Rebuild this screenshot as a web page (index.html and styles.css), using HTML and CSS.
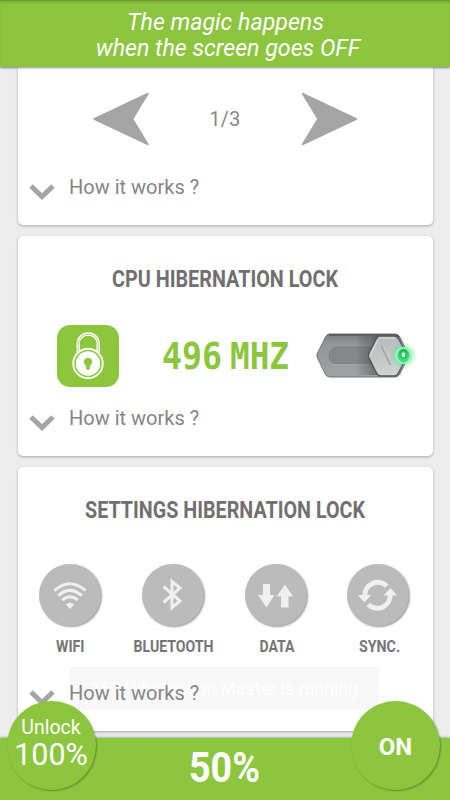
FILE: index.html
```html
<!DOCTYPE html>
<html lang="en">
<head>
<meta charset="utf-8">
<title>Hibernation Master</title>
<link rel="stylesheet" href="styles.css">
</head>
<body>
<div class="app">
  <header class="banner"><p class="l1">The magic happens</p><p class="l2">when the screen goes OFF</p></header>
  <main class="cards">
    <section class="card pager-card">
      <div class="pager">
        <svg width="57" height="54" viewBox="0 0 57 54"><path d="M1 27L55 1.5L39.500 27L55 52.500Z" class="arrow"/></svg>
        <span class="page">1/3</span>
        <svg width="57" height="54" viewBox="0 0 57 54"><path d="M55.500 27L1.500 1.500L17 27L1.500 52.500Z" class="arrow"/></svg>
      </div>
      <div class="how"><svg width="26" height="18" viewBox="0 0 26 18"><path d="M2 3L13 13.500L24 3" class="chev"/></svg><span>How it works ?</span></div>
    </section>
    <section class="card cpu-card">
      <h2><svg width="228" height="30"><text x="1" y="23" textLength="226" lengthAdjust="spacingAndGlyphs">CPU HIBERNATION LOCK</text></svg></h2>
      <div class="cpu">
        <svg class="lock" width="62" height="62" viewBox="0 0 62 62">
          <rect width="62" height="62" rx="13" fill="#8cc63f"/>
          <path d="M21.200 28V18.500A10 9.500 0 0 1 41.200 18.500V28" fill="none" stroke="#fff" stroke-width="3.400"/>
          <path d="M21.200 28V18.500A10 9.500 0 0 1 41.200 18.500V28" fill="none" stroke="#8cc63f" stroke-width=".7"/>
          <circle cx="31" cy="38.500" r="15.700" fill="#fff"/>
          <circle cx="31" cy="38.500" r="13" fill="none" stroke="#8cc63f" stroke-width="1.600"/>
          <circle cx="31" cy="37" r="4.200" fill="#8cc63f"/>
          <path d="M29 38h4v5a2 2 0 0 1-4 0z" fill="#8cc63f"/>
        </svg>
        <svg class="mhz" width="128" height="42"><text x="-1" y="31.500" textLength="60" lengthAdjust="spacingAndGlyphs">496</text><text x="67" y="31.500" textLength="59" lengthAdjust="spacingAndGlyphs">MHZ</text></svg>
        <svg class="switch" width="110" height="60" viewBox="0 0 110 60">
          <defs>
            <linearGradient id="base" x1="0" y1="0" x2="0" y2="1"><stop offset="0" stop-color="#7d8082"/><stop offset=".25" stop-color="#949799"/><stop offset="1" stop-color="#a0a2a3"/></linearGradient>
            <linearGradient id="knob" x1="0" y1="0" x2="0" y2="1"><stop offset="0" stop-color="#b8babb"/><stop offset="1" stop-color="#d2d3d3"/></linearGradient>
            <radialGradient id="glow"><stop offset=".3" stop-color="#2de676" stop-opacity=".6"/><stop offset="1" stop-color="#56ef91" stop-opacity="0"/></radialGradient>
            <radialGradient id="led" cx=".5" cy=".35"><stop offset="0" stop-color="#8effac"/><stop offset=".45" stop-color="#16b84e"/><stop offset="1" stop-color="#37e676"/></radialGradient>
            <linearGradient id="shade"><stop offset="0" stop-color="#333" stop-opacity="0"/><stop offset="1" stop-color="#333" stop-opacity=".5"/></linearGradient>
          </defs>
          <path d="M14 9H80Q83 9 84.500 11.500L93 28Q94 30.500 93 33L84.500 49.500Q83 52 80 52H15Q12 52 10.500 49.500L2.500 33Q1 30.500 2.500 28L10.500 12Q12 9 14 9Z" fill="url(#base)" stroke="#717477"/>
          <path d="M14 10H80Q83 10 84 12" fill="none" stroke="#55585a" stroke-width="1.500"/>
          <rect x="14" y="22" width="50" height="17.500" rx="8.700" fill="#85888a" stroke="#787b7d" stroke-width=".7"/>
          <path d="M18 39.700H55" stroke="#adafb0"/>
          <path d="M40 11H64L54 30L63 50H40Z" fill="url(#shade)"/>
          <path d="M64 11H79Q82 11 83.500 13.500L91 28Q92 30.500 91 33L83.500 48Q82 51 79 51H66Q63 51 61.500 48L54 33Q52.500 30.500 54 28L61.500 13.500Q63 11 64 11Z" fill="url(#knob)" stroke="#55585a" stroke-width="1.500"/>
          <path d="M64 13H80M55.500 30L63 14" fill="none" stroke="#e2e2e2"/>
          <path d="M67 22L75.500 39" stroke="#a5a7a8" stroke-width="2.500" stroke-linecap="round"/>
          <path d="M68.500 22L76.500 39" stroke="#dadada" stroke-width=".8"/>
          <circle cx="88.500" cy="30.500" r="8.500" fill="#e3f1e7"/>
          <circle cx="88.500" cy="30.500" r="14" fill="url(#glow)"/>
          <ellipse cx="88.500" cy="30.500" rx="5.800" ry="6.800" fill="url(#led)"/>
          <ellipse cx="88.500" cy="30" rx="2" ry="2.300" fill="#dcffe6"/>
        </svg>
      </div>
      <div class="how"><svg width="26" height="18" viewBox="0 0 26 18"><path d="M2 3L13 13.500L24 3" class="chev"/></svg><span>How it works ?</span></div>
    </section>
    <section class="card settings-card">
      <h2><svg width="282" height="30"><text x="1" y="23" textLength="280" lengthAdjust="spacingAndGlyphs">SETTINGS HIBERNATION LOCK</text></svg></h2>
      <div class="settings">
        <div class="item"><svg class="disc" width="62" height="62" viewBox="0 0 62 62">
          <g fill="none" stroke="#f0f0f0" stroke-width="3"><path d="M15.300 26.700Q31 12.700 46.700 26.700"/><path d="M19.300 31.600Q31 21.200 42.700 31.600"/><path d="M23.300 36.100Q31 29.400 38.700 36.100"/></g><path d="M26.800 40.500Q31 37 35.200 40.500L31 45Z" fill="#f0f0f0"/></svg>
          <svg width="62" height="22"><text x="17" y="17" textLength="28.500" lengthAdjust="spacingAndGlyphs">WIFI</text></svg></div>
        <div class="item"><svg class="disc" width="62" height="62" viewBox="0 0 62 62">
          <path d="M21.500 22.500L38 37L30 43.500V17.500L38 24L21.500 38.500" fill="none" stroke="#f0f0f0" stroke-width="3"/></svg>
          <svg width="86" height="22"><text x="3.500" y="17" textLength="80" lengthAdjust="spacingAndGlyphs">BLUETOOTH</text></svg></div>
        <div class="item"><svg class="disc" width="62" height="62" viewBox="0 0 62 62">
          <path d="M18 20H25V31H29.500L21.500 43.500L13 31H18ZM36 43.500V32.500H31.500L40 20.500L48 32.500H43.500V43.500Z" fill="#f0f0f0"/></svg>
          <svg width="62" height="22"><text x="14.500" y="17" textLength="35" lengthAdjust="spacingAndGlyphs">DATA</text></svg></div>
        <div class="item"><svg class="disc" width="62" height="62" viewBox="0 0 62 62">
          <g fill="none" stroke="#f0f0f0" stroke-width="5"><path d="M17.800 32A13 13 0 0 1 39.800 22"/><path d="M43.200 30A13 13 0 0 1 21.200 40.500"/></g><path d="M11 31H24L17.500 38.500ZM36.500 31.500L43.500 24L50 31.500Z" fill="#f0f0f0"/></svg>
          <svg width="62" height="22"><text x="12" y="17" textLength="41" lengthAdjust="spacingAndGlyphs">SYNC.</text></svg></div>
      </div>
      <div class="toast">360 Hibernation Master is running</div>
      <div class="how"><svg width="26" height="18" viewBox="0 0 26 18"><path d="M2 3L13 13.500L24 3" class="chev"/></svg><span>How it works ?</span></div>
    </section>
  </main>
  <footer class="bar"><svg width="76" height="56"><text x="2" y="44" textLength="71" lengthAdjust="spacingAndGlyphs">50%</text></svg></footer>
  <div class="fab unlock"><span>Unlock</span><b>100%</b></div>
  <div class="fab on">ON</div>
</div>
</body>
</html>
```
FILE: styles.css
```css
* { box-sizing: border-box; }
body { margin: 0; font-family: Roboto, sans-serif; background: #ededed; }
svg { display: block; flex: none; overflow: visible; }
p, h2 { margin: 0; }
.app { position: relative; width: 450px; height: 800px; overflow: hidden; display: flex; flex-direction: column; }
.banner { position: relative; z-index: 1; flex: none; height: 67px; padding-top: 8px; background: #8cc63f; border-top: 1px solid #6f9c35; box-shadow: 0 1px 2px rgba(0,0,0,.45), inset 0 2px 2px rgba(0,0,0,.1); color: #fff; text-align: center; font-size: 23.2px; font-style: italic; line-height: 26px; }
.l1 { padding-left: 1px; }
.l2 { padding-left: 6px; }
.cards { height: 671px; flex: none; padding: 0 17.5px; display: flex; flex-direction: column; gap: 11px; }
.card { position: relative; flex: none; width: 415px; background: #fff; border-radius: 5px; box-shadow: 0 1px 3px rgba(0,0,0,.3); }
.pager-card { height: 158px; border-radius: 0 0 5px 5px; padding-top: 25px; }
.pager { display: flex; justify-content: space-between; align-items: center; padding: 0 75px; height: 54px; }
.arrow { fill: #a5a5a5; stroke: #a5a5a5; stroke-width: 1.5; stroke-linejoin: round; }
.page { color: #858585; font-size: 19.5px; letter-spacing: .3px; }
.how { position: relative; display: flex; align-items: flex-start; height: 26px; padding-left: 11.5px; font-size: 20px; line-height: 26px; color: #858585; }
.how svg { margin-top: 9px; }
.how span { margin-left: 14px; }
.chev { fill: none; stroke: #a5a5a5; stroke-width: 5; }
.pager-card .how { margin-top: 28px; }
.cpu-card { height: 220px; padding-top: 28px; }
h2 { display: flex; justify-content: center; height: 30px; }
h2 text { font-size: 23px; font-weight: 700; fill: #707070; }
.cpu { display: flex; height: 62px; margin-top: 30.500px; padding-left: 39.5px; }
.mhz { margin: 12px 0 0 44px; }
.mhz text { font-family: "DejaVu Sans Mono", monospace; font-size: 37.500px; font-weight: 700; fill: #8cc63f; }
.switch { margin: 0 0 0 24px; }
.cpu-card .how { margin-top: 18.500px; }
.settings-card { height: 264px; padding-top: 28px; }
.settings { display: flex; justify-content: space-between; margin-top: 39px; padding: 0 23px 0 21.500px; }
.item { width: 62px; display: flex; flex-direction: column; align-items: center; }
.item text { font-size: 16px; font-weight: 700; fill: #757575; }
.item > svg + svg { margin-top: 9px; }
.disc { border-radius: 50%; background: #bbb; box-shadow: 1px 1px 2px rgba(0,0,0,.4); }
.toast { position: absolute; left: 52.500px; top: 200px; width: 309px; height: 43px; padding-left: 20px; background: #f8f8f8; color: #fff; font-size: 17.5px; line-height: 44px; letter-spacing: .12px; white-space: nowrap; }
.settings-card .how { margin-top: 23px; }
.bar { height: 62px; flex: none; background: #8cc63f; display: flex; justify-content: center; box-shadow: 0 -1px 2px rgba(0,0,0,.25); }
.bar text { font-size: 43px; font-weight: 700; fill: #fff; }
.fab { position: absolute; top: 701px; width: 89px; height: 89px; border-radius: 50%; background: #8cc63f; box-shadow: 1px 1px 2px rgba(0,0,0,.3); color: #fff; display: flex; flex-direction: column; align-items: center; }
.unlock { left: 6.500px; padding-top: 14px; }
.unlock span { font-size: 19.500px; line-height: 26px; }
.unlock b { font-size: 30.500px; line-height: 28px; font-weight: 400; letter-spacing: -.1px; }
.on { left: 351px; justify-content: center; font-size: 24px; font-weight: 700; padding-top: 2px; }
```
